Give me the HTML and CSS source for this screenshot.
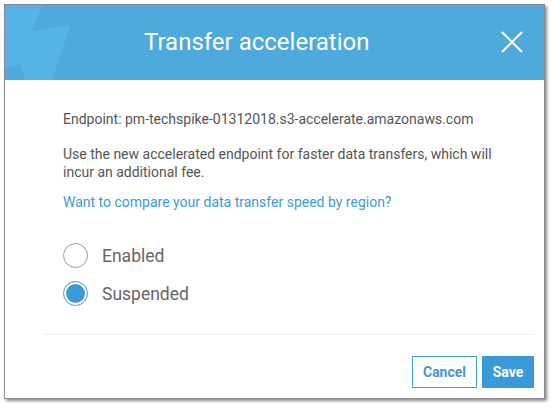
FILE: index.html
```html
<!DOCTYPE html>
<html lang="en">
  <head>
    <meta charset="UTF-8" />
    <meta name="viewport" content="width=device-width, initial-scale=1.0" />
    <title>Transfer acceleration</title>
    <link rel="stylesheet" href="styles.css">
  </head>
  <body>
    <div class="modal">
      <div class="modal-header">
        <svg class="bolt" width="120" height="75" viewBox="0 0 120 75">
          <polygon points="-20,0 35,0 24,29 63,22 45,75 22,75 17,57 -20,66" fill="#55b4e3" stroke="#55b4e3" stroke-width="4" stroke-linejoin="round" />
        </svg>
        <h2 class="modal-title">Transfer acceleration</h2>
        <button class="close-btn" aria-label="close">
          <svg width="22" height="22" viewBox="0 0 22 22">
            <path d="M1 1 L21 21 M21 1 L1 21" stroke="#fff" stroke-width="2.2" fill="none" />
          </svg>
        </button>
      </div>

      <div class="modal-body">
        <p class="endpoint">Endpoint: pm-techspike-01312018.s3-accelerate.amazonaws.com</p>
        <p class="desc">Use the new accelerated endpoint for faster data transfers, which will incur an additional fee.</p>
        <a class="compare-link" href="#">Want to compare your data transfer speed by region?</a>

        <div class="options">
          <label class="option">
            <span class="radio"></span>
            <span>Enabled</span>
          </label>
          <label class="option">
            <span class="radio checked"></span>
            <span>Suspended</span>
          </label>
        </div>
      </div>

      <div class="modal-footer">
        <button class="btn btn-cancel">Cancel</button>
        <button class="btn btn-save">Save</button>
      </div>
    </div>
  </body>
</html>
```

FILE: styles.css
```css
* {
  margin: 0px;
  padding: 0px;
  box-sizing: border-box;
}
body {
  background: #fff;
  padding: 4px;
  font-family: Roboto, "Liberation Sans", sans-serif;
}

.modal {
  width: 541px;
  height: 395px;
  border: 1px solid #8a8a8a;
  background: #fff;
  box-shadow: 2px 2px 3px rgba(0, 0, 0, 0.45);
  display: flex;
  flex-direction: column;
}

.modal-header {
  position: relative;
  height: 75px;
  background: #4ea9dc;
  display: flex;
  align-items: center;
  overflow: hidden;
}
.bolt {
  position: absolute;
  left: 0;
  top: 0;
}
.modal-title {
  position: relative;
  flex: 1;
  padding-left: 139px;
  padding-bottom: 2px;
  color: #fff;
  font-size: 24px;
  font-weight: 400;
}
.close-btn {
  background: none;
  border: none;
  width: 22px;
  height: 22px;
  margin-right: 21px;
  margin-bottom: 2px;
  display: flex;
}

.modal-body {
  padding: 30px 40px 0 58px;
  font-size: 14px;
  color: #555;
  line-height: 18px;
}
.endpoint {
  margin-bottom: 17px;
}
.desc {
  margin-bottom: 12px;
}
.compare-link {
  color: #3b9bd9;
  text-decoration: none;
}

.options {
  margin-top: 32px;
  display: flex;
  flex-direction: column;
  gap: 13px;
}
.option {
  display: flex;
  align-items: center;
  gap: 14px;
  font-size: 17.5px;
  color: #666;
}
.radio {
  width: 25px;
  height: 25px;
  border: 1px solid #999;
  border-radius: 50%;
  background: #fff;
}
.radio.checked {
  background: #3a9ad9;
  box-shadow: inset 0 0 0 2px #fff;
}

.modal-footer {
  margin: auto 40px 0 38px;
  border-top: 1px solid #eee;
  padding: 21px 0 10px;
  display: flex;
  justify-content: flex-end;
  gap: 5px;
  margin-right: 10px;
}
.btn {
  height: 32px;
  font-family: Roboto, "Liberation Sans", sans-serif;
  font-size: 14px;
  font-weight: 700;
  border: 1px solid #3a9ad9;
}
.btn-cancel {
  width: 65px;
  background: #fff;
  color: #4a93d0;
}
.btn-save {
  width: 52px;
  background: #3a9ad9;
  color: #fff;
}
```
